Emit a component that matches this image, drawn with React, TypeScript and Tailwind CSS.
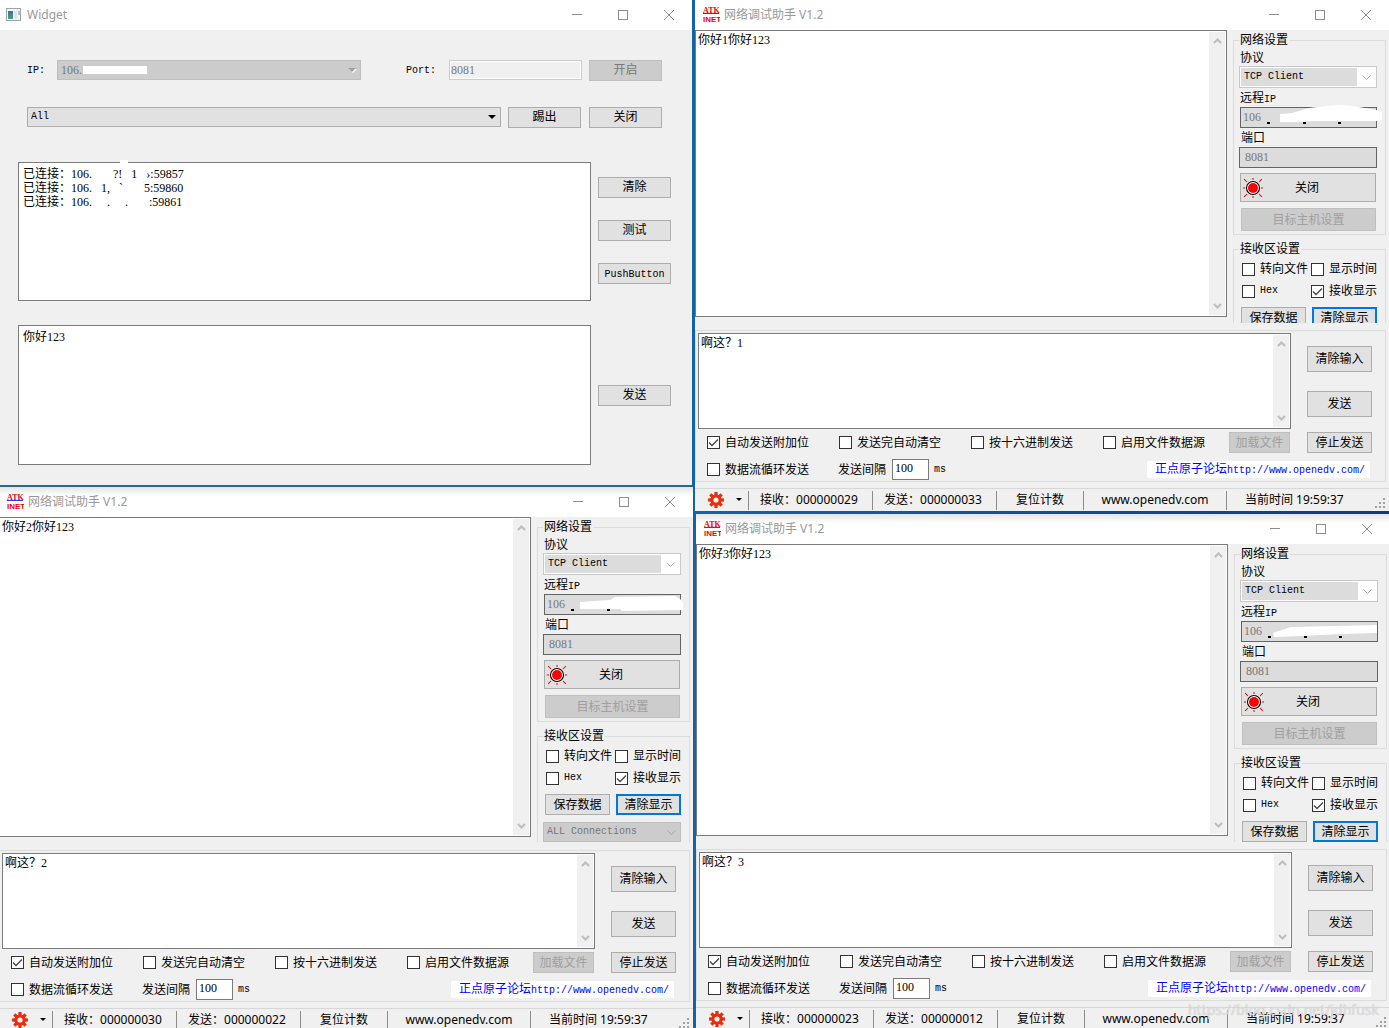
import React, { useId, useState } from "react";

type MaskType = {
  points: string;
  dots: number[];
};

type ToolWindowProps = {
  index: number;
  received: string;
  sent: string;
  mask: MaskType;
  className: string;
};

const AppIcon: React.FC = () => (
  <svg width="17" height="16" viewBox="0 0 17 16" aria-hidden="true">
    <text
      x="0"
      y="6"
      fill="#f00000"
      fontFamily="Liberation Serif, serif"
      fontWeight="700"
      fontSize="8"
    >
      ATK
    </text>
    <rect x="0" y="6" width="16" height="1" fill="#2a3cff" />
    <text
      x="0"
      y="15"
      fill="#f00000"
      fontFamily="Liberation Sans, sans-serif"
      fontWeight="700"
      fontSize="8"
    >
      INET
    </text>
  </svg>
);

const WidgetIcon: React.FC = () => (
  <svg width="16" height="14" viewBox="0 0 16 14" aria-hidden="true">
    <defs>
      <linearGradient id="widget-pane" x1="0" y1="0" x2="0" y2="1">
        <stop offset="0" stopColor="#3c6fa0" />
        <stop offset="1" stopColor="#4fa07c" />
      </linearGradient>
    </defs>
    <rect x="0.5" y="0.5" width="14" height="12" fill="#f4f5f6" stroke="#9aa3aa" />
    <rect x="2" y="3" width="5" height="8" fill="url(#widget-pane)" />
    <rect x="8" y="3" width="3" height="8" fill="#dfe3e6" />
    <rect x="12" y="3" width="2" height="4" fill="#9cc8d8" />
  </svg>
);

const GearIcon: React.FC = () => (
  <svg width="16" height="16" viewBox="-8 -8 16 16" aria-hidden="true">
    <g fill="#e62e0c">
      {[0, 45, 90, 135].map((angle) => (
        <rect
          key={angle}
          x="-1.6"
          y="-8"
          width="3.2"
          height="16"
          transform={`rotate(${angle})`}
        />
      ))}
      <circle r="5.6" />
    </g>
    <circle r="2.6" fill="#f0f0f0" />
  </svg>
);

const LampIcon: React.FC = () => (
  <svg width="20" height="20" viewBox="-10 -10 20 20" aria-hidden="true">
    <g stroke="#f00000" strokeWidth="1">
      {[0, 45, 90, 135, 180, 225, 270, 315].map((angle) => (
        <line
          key={angle}
          x1="0"
          y1={angle % 90 === 0 ? -10 : -12.5}
          x2="0"
          y2={angle % 90 === 0 ? -8 : -8.5}
          transform={`rotate(${angle})`}
        />
      ))}
    </g>
    <circle r="6.5" fill="#fff" stroke="#000" strokeWidth="1.1" />
    <circle r="5" fill="#ff0000" />
  </svg>
);

const Chevron: React.FC<{ up?: boolean }> = ({ up }) => (
  <svg
    width="9"
    height="6"
    viewBox="0 0 9 6"
    fill="none"
    stroke="#bdbdbd"
    strokeWidth="2"
    aria-hidden="true"
  >
    <path d={up ? "M1 5 4.500 1.500 8 5" : "M1 1 4.500 4.500 8 1"} />
  </svg>
);

const TitleBar: React.FC<{
  icon: React.ReactNode;
  title: string;
  shaded?: boolean;
}> = ({ icon, title, shaded }) => (
  <div
    className={`h-[30px] shrink-0 flex items-center text-[#999999] font-['Noto_Sans','Noto_Sans_CJK_SC',sans-serif] ${
      shaded
        ? "bg-linear-to-b from-[#e4e4e4] via-white via-30% to-white"
        : "bg-white"
    }`}
  >
    {icon}
    <span className="ml-[5px] flex-1 whitespace-nowrap">{title}</span>
    <button aria-label="最小化" className="w-[46px] h-[28px] flex items-center justify-center">
      <svg width="10" height="10" stroke="#8c8c8c">
        <path d="M0 4.500H10" />
      </svg>
    </button>
    <button aria-label="最大化" className="w-[46px] h-[28px] flex items-center justify-center">
      <svg width="10" height="10" stroke="#8c8c8c" fill="none">
        <rect x="0.5" y="0.5" width="9" height="9" />
      </svg>
    </button>
    <button aria-label="关闭窗口" className="w-[46px] h-[28px] flex items-center justify-center">
      <svg width="10" height="10" stroke="#8c8c8c">
        <path d="M0 0 10 10M10 0 0 10" />
      </svg>
    </button>
  </div>
);

const CheckItem: React.FC<{
  label: string;
  checked?: boolean;
  className?: string;
}> = ({ label, checked, className }) => (
  <label className={`flex items-center gap-[5px] whitespace-nowrap ${className ?? ""}`}>
    <span className="relative flex">
      <input
        type="checkbox"
        defaultChecked={checked}
        className="peer appearance-none size-[13px] border border-[#333333] bg-white"
      />
      <svg
        viewBox="0 0 13 13"
        fill="none"
        stroke="#444444"
        strokeWidth="1.3"
        className="absolute inset-0 size-[13px] invisible peer-checked:visible pointer-events-none"
      >
        <path d="M2 6.500 5 9.500 11 3.500" />
      </svg>
    </span>
    {label}
  </label>
);

const ScrollText: React.FC<{
  label: string;
  text: string;
  className: string;
}> = ({ label, text, className }) => (
  <div className={`flex border border-[#7a7a7a] bg-white p-px ${className}`}>
    <textarea
      aria-label={label}
      defaultValue={text}
      className="flex-1 min-w-0 resize-none overflow-hidden px-px leading-[16px] outline-none"
    />
    <div className="w-[16px] bg-[#f0f0f0] flex flex-col items-center justify-between py-1.5">
      <Chevron up />
      <Chevron />
    </div>
  </div>
);

const button = "border border-[#adadad] bg-[#e1e1e1] whitespace-nowrap";
const disabledButton =
  "border border-[#bfbfbf] bg-[#cccccc] text-[#a0a0a0] whitespace-nowrap";
const mono = "font-['Liberation_Mono','Noto_Sans_CJK_SC',monospace] text-[10px]";

const NetworkSettings: React.FC<{ mask: MaskType }> = ({ mask }) => {
  const id = useId();

  return (
    <div className="w-[162px] shrink-0 pl-1.5 pr-[3px] pt-px">
      <fieldset className="border border-[#dcdcdc] pl-[5px] pr-2 pb-[3px]">
        <legend className="h-[18px] leading-[18px] px-px">网络设置</legend>
        <label htmlFor={`${id}-protocol`} className="block h-[17px] leading-[18px] pl-px">
          协议
        </label>
        <div className="h-[22px] border border-[#c8c8c8] bg-white p-px flex items-center">
          <select
            id={`${id}-protocol`}
            className={`appearance-none flex-1 h-full bg-[#dcdcdc] pl-[3px] ${mono}`}
          >
            <option>TCP Client</option>
          </select>
          <span className="w-[18px] flex justify-center pointer-events-none">
            <svg width="9" height="5" fill="none" stroke="#b0b0b0">
              <path d="M0.500 0.500 4.500 4.500 8.500 0.500" />
            </svg>
          </span>
        </div>
        <label htmlFor={`${id}-ip`} className="block h-[19px] leading-[21px] pl-px">
          远程<span className={mono}>IP</span>
        </label>
        <div className="relative ml-px">
          <input
            id={`${id}-ip`}
            defaultValue="106"
            disabled
            className="block w-full h-[21px] border border-[#646464] bg-[#dcdcdc] text-[#787878] pl-0.5"
          />
          <svg
            width="137"
            height="21"
            className="absolute left-0 top-0 overflow-visible pointer-events-none"
          >
            {mask.dots.map((x) => (
              <rect key={x} x={x} y="15" width="3" height="2" fill="#000" />
            ))}
            <polygon points={mask.points} fill="#fff" />
          </svg>
        </div>
        <label htmlFor={`${id}-port`} className="block h-[19px] leading-[21px] pl-0.5">
          端口
        </label>
        <input
          id={`${id}-port`}
          defaultValue="8081"
          disabled
          className="block w-full h-[21px] border border-[#646464] bg-[#dcdcdc] text-[#787878] pl-[5px]"
        />
        <button
          className={`mt-[5px] ml-px w-[136px] h-[29px] pl-0.5 grid grid-cols-[20px_1fr_24px] items-center ${button}`}
        >
          <LampIcon />
          关闭
        </button>
        <button
          disabled
          className={`block mt-1.5 ml-0.5 w-[135px] h-[23px] ${disabledButton}`}
        >
          目标主机设置
        </button>
      </fieldset>

      <fieldset className="mt-[5px] border border-[#dcdcdc] pl-[5px] pr-2 pb-5">
        <legend className="h-[18px] leading-[18px] px-px">接收区设置</legend>
        <div className="grid grid-cols-[69px_1fr] pl-[3px] *:h-[22px]">
          <CheckItem label="转向文件" />
          <CheckItem label="显示时间" />
          <CheckItem label="Hex" className={mono} />
          <CheckItem label="接收显示" checked />
        </div>
        <div className="mt-[5px] pl-0.5 flex justify-between">
          <button className={`w-[65px] h-[21px] leading-[18px] ${button}`}>
            保存数据
          </button>
          <button className="w-[65px] h-[21px] leading-[16px] border-2 border-[#0078d7] bg-[#e1e1e1]">
            清除显示
          </button>
        </div>
        <div className="mt-[7px] h-5 border border-[#bfbfbf] bg-[#cccccc] flex items-center">
          <select
            aria-label="连接"
            disabled
            className={`appearance-none flex-1 h-full pl-[3px] text-[#787878] ${mono}`}
          >
            <option>ALL Connections</option>
          </select>
          <span className="w-[18px] flex justify-center pointer-events-none">
            <svg width="9" height="5" fill="none" stroke="#a8a8a8">
              <path d="M0.500 0.500 4.500 4.500 8.500 0.500" />
            </svg>
          </span>
        </div>
      </fieldset>
    </div>
  );
};

const SendPanel: React.FC<{ text: string }> = ({ text }) => {
  const id = useId();

  return (
    <div className="mt-[7px] mr-[3px] shrink-0 border border-[#dcdcdc] pt-0.5">
      <div className="flex pl-0.5 pr-[13px]">
        <ScrollText label="发送区" text={text} className="flex-1 h-[96px]" />
        <div className="ml-4 pt-[13px] flex flex-col gap-[19px]">
          <button className={`w-[65px] h-[26px] ${button}`}>清除输入</button>
          <button className={`w-[65px] h-[26px] ${button}`}>发送</button>
        </div>
      </div>
      <div className="flex items-center h-[27px] pl-[11px] pr-[13px]">
        <CheckItem label="自动发送附加位" checked className="w-[132px]" />
        <CheckItem label="发送完自动清空" className="w-[132px]" />
        <CheckItem label="按十六进制发送" className="w-[132px]" />
        <CheckItem label="启用文件数据源" />
        <button
          disabled
          className={`ml-auto w-[61px] h-[21px] leading-[18px] ${disabledButton}`}
        >
          加载文件
        </button>
        <button className={`ml-[17px] w-[65px] h-[21px] leading-[18px] ${button}`}>
          停止发送
        </button>
      </div>
      <div className="flex items-center h-[25px] pt-0.5 pl-[11px] pr-[15px]">
        <CheckItem label="数据流循环发送" className="w-[131px]" />
        <label htmlFor={`${id}-interval`}>发送间隔</label>
        <input
          id={`${id}-interval`}
          defaultValue="100"
          className="ml-[6px] w-[37px] h-[21px] border border-[#7a7a7a] bg-white pl-0.5 pb-0.5"
        />
        <span className={`ml-[5px] ${mono}`}>ms</span>
        <a
          href="http://www.openedv.com/"
          className="ml-auto w-[223px] h-[17px] leading-[17px] pl-2 bg-white text-[#0000ff] whitespace-nowrap"
        >
          正点原子论坛<span className={mono}>http://www.openedv.com/</span>
        </a>
      </div>
    </div>
  );
};

const StatusBar: React.FC<{ received: string; sent: string }> = ({
  received,
  sent,
}) => (
  <div className="mt-1.5 h-[23px] shrink-0 border-t border-[#d7d7d7] flex items-center whitespace-nowrap font-['Noto_Sans','Noto_Sans_CJK_SC',sans-serif] *:h-[19px]">
    <button aria-label="设置" className="w-[53px] pl-[13px] flex items-center gap-3">
      <GearIcon />
      <svg width="7" height="4" aria-hidden="true">
        <path d="M0 0H6L3 3Z" />
      </svg>
    </button>
    <span className="w-[124px] border-l border-[#8c8c8c] pl-[11px]">
      接收：{received}
    </span>
    <span className="w-[124px] border-l border-[#8c8c8c] pl-[11px]">
      发送：{sent}
    </span>
    <button className="w-[87px] border-l border-[#8c8c8c]">复位计数</button>
    <span className="w-[143px] border-l border-[#8c8c8c] text-center">
      www.openedv.com
    </span>
    <span className="flex-1 border-l border-[#8c8c8c] pl-[18px]">
      当前时间 19:59:37
    </span>
    <svg width="14" height="19" fill="#a0a0a0" aria-hidden="true">
      <path d="M8 7h2v2h-2zM4 11h2v2h-2zM8 11h2v2h-2zM0 15h2v2h-2zM4 15h2v2h-2zM8 15h2v2h-2z" />
    </svg>
  </div>
);

const ToolWindow: React.FC<ToolWindowProps> = ({
  index,
  received,
  sent,
  mask,
  className,
}) => (
  <section className={`bg-[#f0f0f0] flex flex-col shrink-0 ${className}`}>
    <TitleBar
      icon={
        <span className="ml-2 -mr-px">
          <AppIcon />
        </span>
      }
      title="网络调试助手 V1.2"
      shaded={index > 1}
    />
    <div className="flex-1 min-h-0 flex overflow-hidden">
      <ScrollText
        label="接收区"
        text={`你好${index}你好123`}
        className="flex-1 mb-[6px]"
      />
      <NetworkSettings mask={mask} />
    </div>
    <SendPanel text={`啊这？${index}`} />
    <StatusBar received={received} sent={sent} />
  </section>
);

const ServerWindow: React.FC = () => {
  const [log] = useState(
    [
      "已连接：106.       ?!   1   ›:59857",
      "已连接：106.   1,   `       5:59860",
      "已连接：106.     .     .       :59861",
    ].join("\n")
  );
  const qtButton = `w-[73px] h-[21px] leading-[19px] ${button}`;
  const qtText =
    "flex-1 min-w-0 resize-none overflow-hidden border border-[#7a7a7a] bg-white px-1 py-1 leading-[14px] outline-none";

  return (
    <section className="h-[485px] shrink-0 bg-[#f0f0f0]">
      <TitleBar
        icon={
          <span className="ml-1.5">
            <WidgetIcon />
          </span>
        }
        title="Widget"
      />
      <div className="pt-[30px] pl-[27px] pr-[30px] flex items-start">
        <label htmlFor="server-ip" className={`w-[30px] leading-[21px] ${mono}`}>
          IP:
        </label>
        <div className="relative flex-1">
          <select
            id="server-ip"
            disabled
            className="appearance-none block w-full h-5 border border-[#bfbfbf] bg-[#cccccc] text-[#787878] pl-[3px]"
          >
            <option>106.</option>
          </select>
          <span className="absolute left-[26px] top-[6px] w-[64px] h-2 bg-white" />
          <svg width="9" height="5" className="absolute right-1 top-2 pointer-events-none">
            <path d="M1 1H9L5 5Z" fill="#fff" />
            <path d="M0 0H8L4 4Z" fill="#a0a0a0" />
          </svg>
        </div>
        <label
          htmlFor="server-port"
          className={`ml-[45px] w-[43px] leading-[21px] ${mono}`}
        >
          Port:
        </label>
        <input
          id="server-port"
          defaultValue="8081"
          disabled
          className="w-[133px] h-5 border border-[#cccccc] bg-[#f0f0f0] shadow-[inset_0_0_0_1px_#ffffff] text-[#787878] pl-px"
        />
        <button
          disabled
          className="ml-[7px] w-[73px] h-[21px] leading-[19px] border border-[#bfbfbf] bg-[#cccccc] text-[#787878]"
        >
          开启
        </button>
      </div>

      <div className="mt-[26px] pl-[27px] pr-[30px] flex">
        <div className="relative flex-1">
          <select
            aria-label="客户端"
            className={`appearance-none block w-full h-5 border border-[#adadad] bg-[#e1e1e1] pl-[3px] ${mono}`}
          >
            <option>All</option>
          </select>
          <svg width="8" height="4" className="absolute right-[5px] top-2 pointer-events-none">
            <path d="M0 0H8L4 4Z" />
          </svg>
        </div>
        <button className={`ml-[7px] ${qtButton}`}>踢出</button>
        <button className={`ml-2 ${qtButton}`}>关闭</button>
      </div>

      <div className="mt-[34px] pl-[18px] pr-[21px] flex gap-[7px]">
        <div className="relative flex-1 flex h-[139px]">
          <textarea aria-label="日志" defaultValue={log} className={qtText} />
          <span className="absolute left-[102px] -top-0.5 w-2 h-[5px] bg-white" />
        </div>
        <div className="pt-[15px] flex flex-col gap-[22px]">
          <button className={qtButton}>清除</button>
          <button className={qtButton}>测试</button>
          <button className={qtButton}>
            <span className={mono}>PushButton</span>
          </button>
        </div>
      </div>

      <div className="mt-6 pl-[18px] pr-[21px] h-[140px] flex items-stretch gap-[7px]">
        <textarea aria-label="消息" defaultValue="你好123" className={qtText} />
        <button className={`self-center ${qtButton}`}>发送</button>
      </div>
    </section>
  );
};

const App: React.FC = () => {
  return (
    <main className="relative h-screen overflow-hidden grid grid-cols-[minmax(0,692fr)_minmax(0,694fr)] gap-[3px] bg-[#1464a5] text-black text-[12px] leading-[18px] font-['Liberation_Serif','Noto_Sans_CJK_SC',serif]">
      <div className="flex flex-col gap-0.5 bg-[#1f6d8f]">
        <ServerWindow />
        <ToolWindow
          index={2}
          received="000000030"
          sent="000000022"
          mask={{
            points:
              "36,8 66,6 71,3 131,2 136,5 139,8 139,16 78,17 76,15 36,15",
            dots: [27, 63],
          }}
          className="h-[544px] -mx-px"
        />
      </div>
      <div className="flex flex-col gap-[3px] bg-linear-to-r from-[#1464a5] to-[#12397f]">
        <ToolWindow
          index={1}
          received="000000029"
          sent="000000033"
          mask={{
            points:
              "40,7 52,6 69,1 86,-1 102,-2 119,0 136,3 142,5 142,13 136,14 73,14 56,15 40,15",
            dots: [27, 63, 98],
          }}
          className="h-[511px]"
        />
        <ToolWindow
          index={3}
          received="000000023"
          sent="000000012"
          mask={{
            points: "32,12 44,8 50,6 136,4 136,12 100,13 60,15 33,16",
            dots: [27, 63, 98],
          }}
          className="h-[516px] ml-px -mr-px"
        />
      </div>
      {/* Watermark */}
      <span className="absolute right-2.5 bottom-2 text-[14px] leading-[20px] text-white/50 [text-shadow:0_0_1px_#b0b0b0] pointer-events-none font-['Noto_Sans',sans-serif]">
        https://blog.csdn.net/jdhfusk
      </span>
    </main>
  );
};

export default App;
